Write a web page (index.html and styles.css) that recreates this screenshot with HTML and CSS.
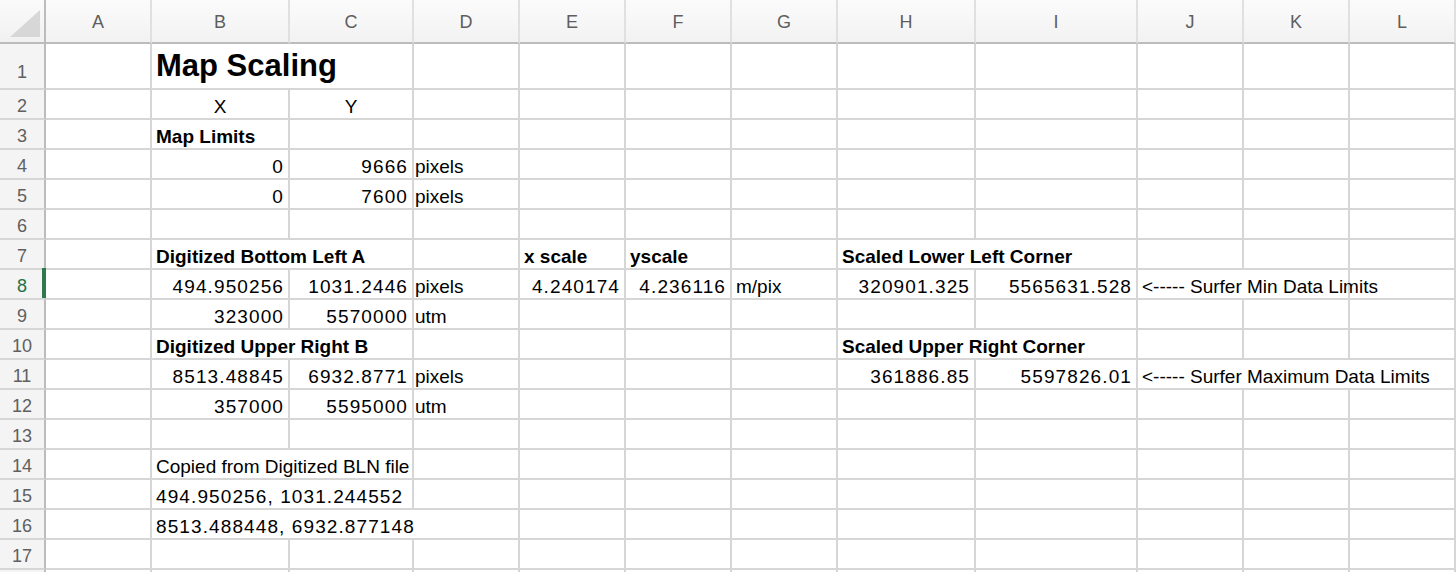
FILE: index.html
```html
<!DOCTYPE html>
<html lang="en">
<head>
<meta charset="utf-8">
<title>Map Scaling</title>
<link rel="stylesheet" href="styles.css">
</head>
<body>
<div class="sheet">
  <div class="row head">
    <div class="corner"><span class="tri"></span></div>
    <div class="ch">A</div><div class="ch">B</div><div class="ch">C</div><div class="ch">D</div>
    <div class="ch">E</div><div class="ch">F</div><div class="ch">G</div><div class="ch">H</div>
    <div class="ch">I</div><div class="ch">J</div><div class="ch">K</div><div class="ch">L</div>
  </div>

  <div class="row r1">
    <div class="rh rh1">1</div>
    <div class="c"></div>
    <div class="c s2 title">Map Scaling</div>
    <div class="c"></div><div class="c"></div><div class="c"></div><div class="c"></div><div class="c"></div><div class="c"></div><div class="c"></div><div class="c"></div><div class="c"></div>
  </div>

  <div class="row">
    <div class="rh">2</div>
    <div class="c"></div>
    <div class="c mid">X</div><div class="c mid">Y</div>
    <div class="c"></div><div class="c"></div><div class="c"></div><div class="c"></div><div class="c"></div><div class="c"></div><div class="c"></div><div class="c"></div><div class="c"></div>
  </div>

  <div class="row">
    <div class="rh">3</div>
    <div class="c"></div>
    <div class="c b">Map Limits</div><div class="c"></div>
    <div class="c"></div><div class="c"></div><div class="c"></div><div class="c"></div><div class="c"></div><div class="c"></div><div class="c"></div><div class="c"></div><div class="c"></div>
  </div>

  <div class="row">
    <div class="rh">4</div>
    <div class="c"></div>
    <div class="c n">0</div><div class="c n">9666</div><div class="c u">pixels</div>
    <div class="c"></div><div class="c"></div><div class="c"></div><div class="c"></div><div class="c"></div><div class="c"></div><div class="c"></div><div class="c"></div>
  </div>

  <div class="row">
    <div class="rh">5</div>
    <div class="c"></div>
    <div class="c n">0</div><div class="c n">7600</div><div class="c u">pixels</div>
    <div class="c"></div><div class="c"></div><div class="c"></div><div class="c"></div><div class="c"></div><div class="c"></div><div class="c"></div><div class="c"></div>
  </div>

  <div class="row">
    <div class="rh">6</div>
    <div class="c"></div><div class="c"></div><div class="c"></div><div class="c"></div><div class="c"></div><div class="c"></div>
    <div class="c"></div><div class="c"></div><div class="c"></div><div class="c"></div><div class="c"></div><div class="c"></div>
  </div>

  <div class="row">
    <div class="rh">7</div>
    <div class="c"></div>
    <div class="c s2 b">Digitized Bottom Left A</div>
    <div class="c"></div>
    <div class="c b">x scale</div><div class="c b">yscale</div><div class="c"></div>
    <div class="c s2 b">Scaled Lower Left Corner</div>
    <div class="c"></div><div class="c"></div><div class="c"></div>
  </div>

  <div class="row">
    <div class="rh sel">8</div>
    <div class="c"></div>
    <div class="c n">494.950256</div><div class="c n">1031.2446</div><div class="c u">pixels</div>
    <div class="c n">4.240174</div><div class="c n">4.236116</div><div class="c">m/pix</div>
    <div class="c n">320901.325</div><div class="c n">5565631.528</div>
    <div class="c s2">&lt;----- Surfer Min Data Limits</div>
    <div class="c"></div>
  </div>

  <div class="row">
    <div class="rh">9</div>
    <div class="c"></div>
    <div class="c n">323000</div><div class="c n">5570000</div><div class="c u">utm</div>
    <div class="c"></div><div class="c"></div><div class="c"></div><div class="c"></div><div class="c"></div><div class="c"></div><div class="c"></div><div class="c"></div>
  </div>

  <div class="row">
    <div class="rh">10</div>
    <div class="c"></div>
    <div class="c s2 b">Digitized Upper Right B</div>
    <div class="c"></div><div class="c"></div><div class="c"></div><div class="c"></div>
    <div class="c s2 b">Scaled Upper Right Corner</div>
    <div class="c"></div><div class="c"></div><div class="c"></div>
  </div>

  <div class="row">
    <div class="rh">11</div>
    <div class="c"></div>
    <div class="c n">8513.48845</div><div class="c n">6932.8771</div><div class="c u">pixels</div>
    <div class="c"></div><div class="c"></div><div class="c"></div>
    <div class="c n">361886.85</div><div class="c n">5597826.01</div>
    <div class="c s3">&lt;----- Surfer Maximum Data Limits</div>
  </div>

  <div class="row">
    <div class="rh">12</div>
    <div class="c"></div>
    <div class="c n">357000</div><div class="c n">5595000</div><div class="c u">utm</div>
    <div class="c"></div><div class="c"></div><div class="c"></div><div class="c"></div><div class="c"></div><div class="c"></div><div class="c"></div><div class="c"></div>
  </div>

  <div class="row">
    <div class="rh">13</div>
    <div class="c"></div><div class="c"></div><div class="c"></div><div class="c"></div><div class="c"></div><div class="c"></div>
    <div class="c"></div><div class="c"></div><div class="c"></div><div class="c"></div><div class="c"></div><div class="c"></div>
  </div>

  <div class="row">
    <div class="rh">14</div>
    <div class="c"></div>
    <div class="c s2">Copied from Digitized BLN file</div>
    <div class="c"></div><div class="c"></div><div class="c"></div><div class="c"></div><div class="c"></div><div class="c"></div><div class="c"></div><div class="c"></div><div class="c"></div>
  </div>

  <div class="row">
    <div class="rh">15</div>
    <div class="c"></div>
    <div class="c s2 nl">494.950256, 1031.244552</div>
    <div class="c"></div><div class="c"></div><div class="c"></div><div class="c"></div><div class="c"></div><div class="c"></div><div class="c"></div><div class="c"></div><div class="c"></div>
  </div>

  <div class="row">
    <div class="rh">16</div>
    <div class="c"></div>
    <div class="c s3 nl">8513.488448, 6932.877148</div>
    <div class="c"></div><div class="c"></div><div class="c"></div><div class="c"></div><div class="c"></div><div class="c"></div><div class="c"></div><div class="c"></div>
  </div>

  <div class="row">
    <div class="rh">17</div>
    <div class="c"></div><div class="c"></div><div class="c"></div><div class="c"></div><div class="c"></div><div class="c"></div>
    <div class="c"></div><div class="c"></div><div class="c"></div><div class="c"></div><div class="c"></div><div class="c"></div>
  </div>

  <div class="row">
    <div class="rh"></div>
    <div class="c"></div><div class="c"></div><div class="c"></div><div class="c"></div><div class="c"></div><div class="c"></div>
    <div class="c"></div><div class="c"></div><div class="c"></div><div class="c"></div><div class="c"></div><div class="c"></div>
  </div>
</div>
</body>
</html>
```

FILE: styles.css
```css
html, body {
  margin: 0;
  padding: 0;
  background: #ffffff;
  overflow: hidden;
}

body {
  width: 1456px;
  height: 572px;
  font-family: "Liberation Sans", Arial, sans-serif;
  color: #000000;
}

.sheet {
  display: flex;
  flex-direction: column;
  width: 1456px;
}

.row {
  display: grid;
  grid-template-columns: 46px 106px 138px 124px 106px 106px 106px 106px 138px 162px 106px 106px 106px;
  height: 30px;
}

.row.head {
  height: 44px;
}

.row.r1 {
  height: 46px;
}

/* column header */
.corner {
  box-sizing: border-box;
  height: 44px;
  border-right: 2px solid #bcbcbc;
  border-bottom: 2px solid #bcbcbc;
  background: linear-gradient(#fafafa, #f1f1f1);
  display: flex;
  justify-content: flex-end;
  align-items: flex-end;
  padding: 0 4px 5px 0;
}

.tri {
  display: block;
  width: 30px;
  height: 27px;
  background: #d7d7d7;
  clip-path: polygon(100% 0, 100% 100%, 0 100%);
}

.ch {
  box-sizing: border-box;
  height: 44px;
  border-right: 2px solid #e0e0e0;
  border-bottom: 2px solid #bcbcbc;
  background: linear-gradient(#fbfbfb, #f2f2f2);
  text-align: center;
  font-size: 18px;
  line-height: 42px;
  padding-top: 1px;
  color: #5e5e5e;
}

/* row header */
.rh {
  box-sizing: border-box;
  position: relative;
  border-right: 2px solid #bcbcbc;
  border-bottom: 2px solid #d6d6d6;
  background: #f4f4f4;
  text-align: center;
  font-size: 18px;
  line-height: 20px;
  padding-top: 6px;
  color: #606060;
}

.rh.rh1 {
  padding-top: 18px;
}

.rh.sel {
  color: #217346;
}

.rh.sel::after {
  content: "";
  position: absolute;
  right: -2px;
  top: -2px;
  bottom: 0;
  width: 4px;
  background: #2f7a4c;
}

/* cells */
.c {
  box-sizing: border-box;
  border-right: 2px solid #d6d6d6;
  border-bottom: 2px solid #d6d6d6;
  font-size: 19px;
  line-height: 20px;
  padding: 7px 4px 0 4px;
  white-space: nowrap;
  min-width: 0;
}

.s2 {
  grid-column: span 2;
}

.s3 {
  grid-column: span 3;
}

.b {
  font-weight: bold;
}

.mid {
  text-align: center;
}

.n {
  text-align: right;
  letter-spacing: 1.1px;
  padding-right: 4px;
}

.nl {
  letter-spacing: 1.1px;
}

.u {
  padding-left: 1px;
}

.title {
  font-size: 31px;
  font-weight: bold;
  line-height: 36px;
  padding-top: 4px;
}
```
